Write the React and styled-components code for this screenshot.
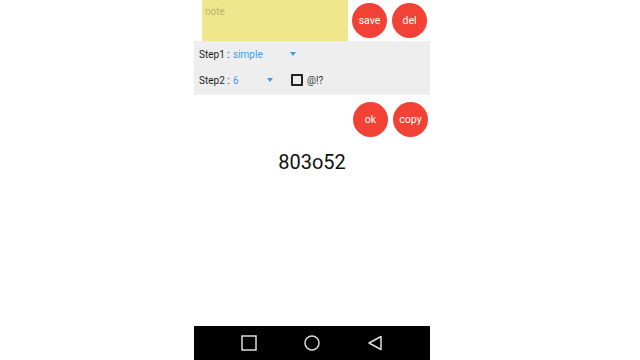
import React from "react";
import styled, { createGlobalStyle } from "styled-components";

const COLORS = {
  RED: "#f24236",
  KHAKI: "#f0e68c",
  PANEL: "#eeeeee",
  BLUE: "#3d9be9",
  TEXT: "#1e1e1e"
};

const GlobalStyle = createGlobalStyle`
  html, body {
    margin: 0;
    background: #ffffff;
    font-family: Roboto, "Liberation Sans", sans-serif;
  }
`;

const Page = styled.div`
  display: flex;
  height: 360px;
  padding-left: 194px;
`;

const Phone = styled.div`
  width: 236px;
  height: 360px;
  display: flex;
  flex-direction: column;
`;

const TopRow = styled.div`
  display: flex;
  align-items: center;
  height: 41px;
  padding: 0 3px 0 8px;
`;

const Note = styled.textarea`
  width: 146px;
  height: 41px;
  box-sizing: border-box;
  margin: 0 4px 0 0;
  padding: 6px 3px;
  border: 0;
  resize: none;
  outline: none;
  background: ${COLORS.KHAKI};
  font-family: inherit;
  font-size: 10px;
  color: ${COLORS.TEXT};

  &::placeholder {
    color: #bdb36e;
  }
`;

const Buttons = styled.div`
  display: flex;
  gap: 5px;
  margin-left: ${(p) => (p.$end ? "auto" : "0")};
`;

const RoundButton = styled.button`
  width: 35px;
  height: 35px;
  border-radius: 50%;
  border: 0;
  padding: 0;
  background: ${COLORS.RED};
  color: #ffffff;
  font-family: inherit;
  font-size: 10.5px;
`;

const Panel = styled.div`
  background: ${COLORS.PANEL};
  height: 54px;
  box-sizing: border-box;
  padding: 0 0 2px 5px;
`;

const Row = styled.div`
  display: flex;
  align-items: center;
  height: 26px;
`;

const Label = styled.span`
  width: 34px;
  font-size: 10px;
  color: ${COLORS.TEXT};
`;

const Spinner = styled.div`
  display: flex;
  align-items: center;
  justify-content: space-between;
  width: ${(p) => p.$width}px;
  font-size: 10px;
  color: ${COLORS.BLUE};
`;

const Arrow = styled.span`
  width: 0;
  height: 0;
  border-left: 3px solid transparent;
  border-right: 3px solid transparent;
  border-top: 4px solid ${COLORS.BLUE};
`;

const Check = styled.label`
  display: flex;
  align-items: center;
  gap: 4px;
  margin-left: 18px;
  font-size: 10px;
  color: #333;
`;

const Box = styled.span`
  width: 8px;
  height: 8px;
  border: 2px solid #222;
  border-radius: 1px;
`;

const ActionRow = styled.div`
  display: flex;
  padding: 7px 2px 0 0;
`;

const Result = styled.div`
  margin-top: 13px;
  text-align: center;
  font-size: 20px;
  line-height: 24px;
  color: #111;
`;

const Spacer = styled.div`
  flex: 1;
`;

const NavBar = styled.div`
  height: 34px;
  background: #000;
  display: flex;
  align-items: center;
  justify-content: center;
  gap: 47px;
`;

const NavIcon = ({ children }) => (
  <svg width="16" height="16" viewBox="0 0 16 16" fill="none" stroke="#dddddd" strokeWidth="1.5">
    {children}
  </svg>
);

export default function App() {
  return (
    <>
      <GlobalStyle />
      <Page>
        <Phone>
          <TopRow>
            <Note placeholder="note" />
            <Buttons>
              <RoundButton>save</RoundButton>
              <RoundButton>del</RoundButton>
            </Buttons>
          </TopRow>
          <Panel>
            <Row>
              <Label>Step1 :</Label>
              <Spinner $width={63}>
                simple <Arrow />
              </Spinner>
            </Row>
            <Row>
              <Label>Step2 :</Label>
              <Spinner $width={40}>
                6 <Arrow />
              </Spinner>
              <Check>
                <Box />
                @!?
              </Check>
            </Row>
          </Panel>
          <ActionRow>
            <Buttons $end>
              <RoundButton>ok</RoundButton>
              <RoundButton>copy</RoundButton>
            </Buttons>
          </ActionRow>
          <Result>803o52</Result>
          <Spacer />
          <NavBar>
            <NavIcon>
              <rect x="1" y="1" width="14" height="14" />
            </NavIcon>
            <NavIcon>
              <circle cx="8" cy="8" r="7" />
            </NavIcon>
            <NavIcon>
              <path d="M14 1.5 L2 8 L14 14.5 Z" strokeLinejoin="round" />
            </NavIcon>
          </NavBar>
        </Phone>
      </Page>
    </>
  );
}
